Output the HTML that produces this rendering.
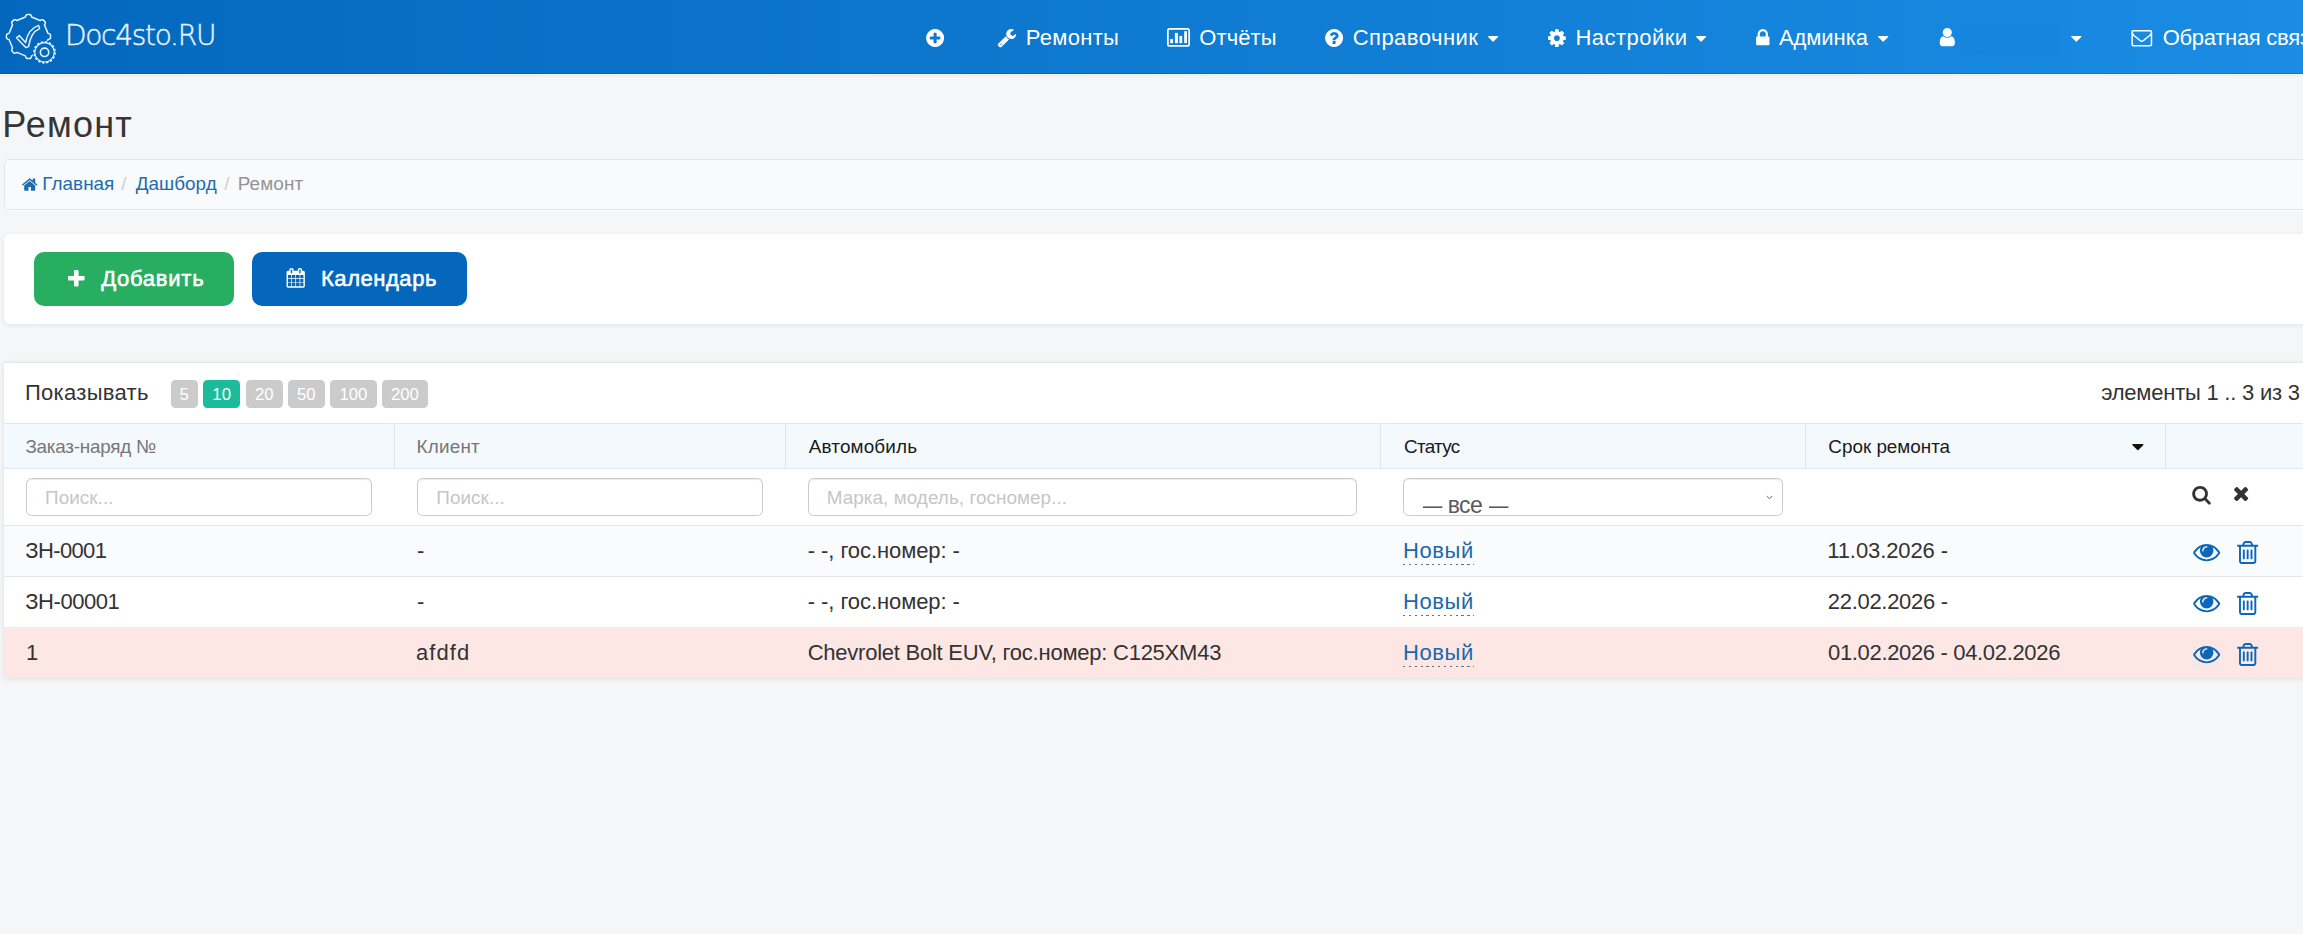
<!DOCTYPE html>
<html lang="ru">
<head>
<meta charset="utf-8">
<title>Ремонт</title>
<style>
*{box-sizing:border-box}
html,body{margin:0;padding:0}
body{width:2303px;height:934px;overflow:hidden;background:#f4f6f8;font-family:"Liberation Sans",sans-serif;color:#333;position:relative}
svg{display:block;overflow:visible}
.t{position:absolute;white-space:nowrap;display:block;margin:0;font-weight:400;text-decoration:none}
.abs{position:absolute}
.nav{position:absolute;left:0;top:0;width:2303px;height:74px;background:linear-gradient(to right,#0368bd 0%,#1a8ce4 100%);overflow:hidden;border-bottom:1px solid rgba(0,50,110,.22);box-shadow:0 1px 0 rgba(255,255,255,.45),0 2px 2px rgba(40,60,80,.06)}
.crumb{position:absolute;left:4px;top:159px;width:2320px;height:50.5px;background:#f9fafc;border:1px solid #e3e6e9;border-radius:5px;box-shadow:0 1px 0 rgba(255,255,255,.7)}
.panel1{position:absolute;left:4px;top:234px;width:2320px;height:90px;background:#fff;border-radius:6px;box-shadow:0 1px 5px rgba(40,50,70,.09)}
.btn{position:absolute;top:252px;height:54px;border-radius:10px}
.panel2{position:absolute;left:4px;top:362px;width:2320px;height:316px;background:#fff;border-top:1px solid #e5e8eb;box-shadow:0 1px 5px rgba(40,50,70,.11)}
.hl{position:absolute;left:4px;width:2320px;height:1px;background:#e3e7ea}
.vl{position:absolute;top:424px;width:1px;height:44px;background:#dfe5ea}
.inp{position:absolute;top:478px;height:38px;background:#fff;border:1px solid #cbcbcb;border-radius:5.5px;box-shadow:inset 0 1px 1px rgba(0,0,0,.075)}
.bd{position:absolute;top:380.2px;height:27.5px;border-radius:4.5px;background:#cbcbcb;color:#fff;font-size:16.8px;line-height:29px;text-align:center}
.dot{position:absolute;height:1px;background:repeating-linear-gradient(to right,#6a6f75 0,#6a6f75 2.2px,transparent 2.2px,transparent 5.85px)}
</style>
</head>
<body>
<nav class="nav"><div class="abs" style="left:1960px;top:24px;width:101px;height:31px;background:#1585dd"></div><svg style="position:absolute;left:0;top:5px" width="70" height="65" viewBox="0 5 70 65" fill="none" stroke="#e4f4ff" stroke-width="1.5" stroke-linejoin="round" stroke-linecap="round"><defs><mask id="mk"><rect x="0" y="0" width="70" height="75" fill="#fff"/><circle cx="44.55" cy="52.35" r="12.7" fill="#000"/></mask></defs><path mask="url(#mk)" d="M25.42 16.99 L25.72 15.74 L26.77 14.42 L30.23 14.42 L31.28 15.74 L31.58 16.99 L40.08 20.51 L41.18 19.84 L42.85 19.65 L45.30 22.10 L45.11 23.77 L44.44 24.87 L47.96 33.37 L49.21 33.67 L50.53 34.72 L50.53 38.18 L49.21 39.23 L47.96 39.53 L44.44 48.03 L45.11 49.13 L45.30 50.80 L42.85 53.25 L41.18 53.06 L40.08 52.39 L31.58 55.91 L31.28 57.16 L30.23 58.48 L26.77 58.48 L25.72 57.16 L25.42 55.91 L16.92 52.39 L15.82 53.06 L14.15 53.25 L11.70 50.80 L11.89 49.13 L12.56 48.03 L9.04 39.53 L7.79 39.23 L6.47 38.18 L6.47 34.72 L7.79 33.67 L9.04 33.37 L12.56 24.87 L11.89 23.77 L11.70 22.10 L14.15 19.65 L15.82 19.84 L16.92 20.51Z"/><path d="M16.6 37.9 L19.2 35.6 L25.6 42.6 C27.2 33.5 31.5 27.8 38.6 25.4 L39.6 28.6 C33.6 31 30 37 28.6 46.6 L25.8 47.6 Z"/><circle cx="44.55" cy="52.35" r="9.7" stroke-width="1.1"/><circle cx="44.55" cy="52.35" r="10.55" stroke-width="1.5" stroke-dasharray="2.5 1.643" stroke-linecap="butt"/><circle cx="44.55" cy="52.35" r="4.2" stroke-width="1.6"/></svg><span class="t" style="left:64.90px;top:15.60px;font-size:28.0px;line-height:39px;color:#e6f4ff;letter-spacing:-1.269px;font-family:'DejaVu Sans','Liberation Sans',sans-serif;font-weight:200;-webkit-text-stroke:0.45px #e6f4ff;">Doc4sto.RU</span><svg style="position:absolute;left:925.70px;top:28.80px" width="18.20" height="18.00" viewBox="128.0 128.0 1536.0 1536.0" preserveAspectRatio="xMidYMid meet"><path fill="#fff" d="M1344 960v-128q0-26-19-45t-45-19h-256v-256q0-26-19-45t-45-19h-128q-26 0-45 19t-19 45v256h-256q-26 0-45 19t-19 45v128q0 26 19 45t45 19h256v256q0 26 19 45t45 19h128q26 0 45-19t19-45v-256h256q26 0 45-19t19-45zm320-64q0 209-103 385.500t-279.500 279.500-385.500 103-385.500-103-279.500-279.500-103-385.500 103-385.500 279.500-279.500 385.500-103 385.500 103 279.500 279.500 103 385.500z"/></svg><svg style="position:absolute;left:997.20px;top:28.80px" width="20.00" height="18.50" viewBox="85.0 128.0 1641.0 1643.0" preserveAspectRatio="xMidYMid meet"><path fill="#fff" d="M448 1472q0-26-19-45t-45-19-45 19-19 45 19 45 45 19 45-19 19-45zm644-420l-682 682q-37 37-90 37-52 0-91-37l-106-108q-38-36-38-90 0-53 38-91l681-681q39 98 114.500 173.500t173.500 114.500zm634-435q0 39-23 106-47 134-164.500 217.500t-258.500 83.500q-185 0-316.500-131.500t-131.500-316.500 131.500-316.500 316.500-131.500q58 0 121.500 16.500t107.500 46.500q16 11 16 28t-16 28l-293 169v224l193 107q5-3 79-48.500t135.500-81 70.500-35.500q15 0 23.500 10t8.500 25z"/></svg><svg style="position:absolute;left:1325.20px;top:28.80px" width="18.20" height="18.00" viewBox="128.0 128.0 1536.0 1536.0" preserveAspectRatio="xMidYMid meet"><path fill="#fff" d="M1024 1376v-192q0-14-9-23t-23-9h-192q-14 0-23 9t-9 23v192q0 14 9 23t23 9h192q14 0 23-9t9-23zm256-672q0-88-55.500-163t-138.500-116-170-41q-243 0-371 213-15 24 8 42l132 100q7 6 19 6 16 0 25-12 53-68 86-92 34-24 86-24 48 0 85.500 26t37.500 59q0 38-20 61t-68 45q-63 28-115.500 86.500t-52.500 125.500v36q0 14 9 23t23 9h192q14 0 23-9t9-23q0-19 21.500-49.500t54.500-49.500q32-18 49-28.500t46-35 44.500-48 28-60.500 12.500-81zm384 192q0 209-103 385.500t-279.500 279.500-385.500 103-385.500-103-279.500-279.500-103-385.500 103-385.500 279.500-279.500 385.500-103 385.500 103 279.500 279.500 103 385.500z"/></svg><svg style="position:absolute;left:1488.40px;top:36.00px" width="10.20" height="5.80" viewBox="384.0 640.0 1024.0 576.0" preserveAspectRatio="xMidYMid meet"><path fill="#fff" d="M1408 704q0 26-19 45l-448 448q-19 19-45 19t-45-19l-448-448q-19-19-19-45t19-45 45-19h896q26 0 45 19t19 45z"/></svg><svg style="position:absolute;left:1548.00px;top:28.60px" width="17.80" height="18.20" viewBox="128.0 128.0 1536.0 1536.0" preserveAspectRatio="xMidYMid meet"><path fill="#fff" d="M1152 896q0-106-75-181t-181-75-181 75-75 181 75 181 181 75 181-75 75-181zm512-109v222q0 12-8 23t-20 13l-185 28q-19 54-39 91 35 50 107 138 10 12 10 25t-9 23q-27 37-99 108t-94 71q-12 0-26-9l-138-108q-44 23-91 38-16 136-29 186-7 28-36 28h-222q-14 0-24.500-8.500t-11.500-21.500l-28-184q-49-16-90-37l-141 107q-10 9-25 9-14 0-25-11-126-114-165-168-7-10-7-23 0-12 8-23 15-21 51-66.500t54-70.500q-27-50-41-99l-183-27q-13-2-21-12.500t-8-23.500v-222q0-12 8-23t19-13l186-28q14-46 39-92-40-57-107-138-10-12-10-24 0-10 9-23 26-36 98.500-107.500t94.500-71.500q13 0 26 10l138 107q44-23 91-38 16-136 29-186 7-28 36-28h222q14 0 24.500 8.500t11.500 21.500l28 184q49 16 90 37l142-107q9-9 24-9 13 0 25 10 129 119 165 170 7 8 7 22 0 12-8 23-15 21-51 66.500t-54 70.500q26 50 41 98l183 28q13 2 21 12.500t8 23.500z"/></svg><svg style="position:absolute;left:1696.20px;top:36.00px" width="10.20" height="5.80" viewBox="384.0 640.0 1024.0 576.0" preserveAspectRatio="xMidYMid meet"><path fill="#fff" d="M1408 704q0 26-19 45l-448 448q-19 19-45 19t-45-19l-448-448q-19-19-19-45t19-45 45-19h896q26 0 45 19t19 45z"/></svg><svg style="position:absolute;left:1756.00px;top:28.70px" width="13.60" height="16.30" viewBox="320.0 128.0 1152.0 1408.0" preserveAspectRatio="xMidYMid meet"><path fill="#fff" d="M640 768h512v-192q0-106-75-181t-181-75-181 75-75 181v192zm832 96v576q0 40-28 68t-68 28h-960q-40 0-68-28t-28-68v-576q0-40 28-68t68-28h32v-192q0-184 132-316t316-132 316 132 132 316v192h32q40 0 68 28t28 68z"/></svg><svg style="position:absolute;left:1878.00px;top:36.00px" width="10.30" height="5.80" viewBox="384.0 640.0 1024.0 576.0" preserveAspectRatio="xMidYMid meet"><path fill="#fff" d="M1408 704q0 26-19 45l-448 448q-19 19-45 19t-45-19l-448-448q-19-19-19-45t19-45 45-19h896q26 0 45 19t19 45z"/></svg><svg style="position:absolute;left:1938.60px;top:28.30px" width="16.60" height="18.20" viewBox="256.0 128.0 1280.0 1536.0" preserveAspectRatio="xMidYMid meet"><path fill="#fff" d="M1536 1399q0 109-62.500 187t-150.500 78h-854q-88 0-150.500-78t-62.500-187q0-85 8.500-160.500t31.500-152 58.500-131 94-89 134.500-34.500q131 128 313 128t313-128q76 0 134.500 34.500t94 89 58.500 131 31.500 152 8.500 160.500zm-256-887q0 159-112.500 271.500t-271.500 112.500-271.500-112.500-112.500-271.500 112.500-271.500 271.500-112.500 271.500 112.500 112.500 271.500z"/></svg><svg style="position:absolute;left:2070.60px;top:36.00px" width="10.60" height="5.80" viewBox="384.0 640.0 1024.0 576.0" preserveAspectRatio="xMidYMid meet"><path fill="#fff" d="M1408 704q0 26-19 45l-448 448q-19 19-45 19t-45-19l-448-448q-19-19-19-45t19-45 45-19h896q26 0 45 19t19 45z"/></svg><svg style="position:absolute;left:2130.80px;top:29.80px" width="21.60" height="16.40" viewBox="0.0 256.0 1792.0 1408.0" preserveAspectRatio="xMidYMid meet"><path fill="#fff" d="M1664 1504v-768q-32 36-69 66-268 206-426 338-51 43-83 67t-86.500 48.500-102.500 24.500h-2q-48 0-102.500-24.500t-86.500-48.500-83-67q-158-132-426-338-37-30-69-66v768q0 13 9.500 22.500t22.500 9.500h1472q13 0 22.500-9.500t9.500-22.500zm0-1051v-24.500l-.5-13-3-12.500-5.500-9-9-7.500-14-2.500h-1472q-13 0-22.500 9.500t-9.500 22.500q0 168 147 284 193 152 401 317 6 5 35 29.500t46 37.500 44.500 31.500 50.500 27.500 43 9h2q20 0 43-9t50.500-27.500 44.500-31.500 46-37.500 35-29.500q208-165 401-317 54-43 100.500-115.500t46.500-131.500zm128-37v1088q0 66-47 113t-113 47h-1472q-66 0-113-47t-47-113v-1088q0-66 47-113t113-47h1472q66 0 113 47t47 113z"/></svg><svg style="position:absolute;left:1166px;top:27px" width="26" height="22" viewBox="1166 27 26 22"><rect x="1167.85" y="28.95" width="21.3" height="17" rx="1.8" fill="none" stroke="#fff" stroke-width="1.75"/><rect x="1170.2" y="39.1" width="2.8" height="4.1" fill="#fff"/><rect x="1174.9" y="32.9" width="3" height="10.3" fill="#fff"/><rect x="1179.4" y="35.9" width="2.8" height="7.3" fill="#fff"/><rect x="1184.2" y="31.2" width="2.7" height="12" fill="#fff"/></svg><a class="t" style="left:1025.79px;top:21.57px;font-size:22.01px;line-height:31px;color:#fff;letter-spacing:0.299px;">Ремонты</a><a class="t" style="left:1199.36px;top:21.57px;font-size:22.01px;line-height:31px;color:#fff;letter-spacing:0.079px;">Отчёты</a><a class="t" style="left:1352.68px;top:21.57px;font-size:22.01px;line-height:31px;color:#fff;letter-spacing:0.469px;">Справочник</a><a class="t" style="left:1575.49px;top:21.57px;font-size:22.01px;line-height:31px;color:#fff;letter-spacing:0.457px;">Настройки</a><a class="t" style="left:1778.96px;top:21.57px;font-size:22.01px;line-height:31px;color:#fff;letter-spacing:-0.079px;">Админка</a><a class="t" style="left:2162.66px;top:21.57px;font-size:22.01px;line-height:31px;color:#fff;letter-spacing:-0.280px;">Обратная связь</a></nav>
<h1 class="t" style="left:2.25px;top:99.53px;font-size:36.0px;line-height:50px;color:#353535;letter-spacing:1.195px;">Ремонт</h1>
<div class="crumb"></div><svg style="position:absolute;left:22.20px;top:177.90px" width="15.40" height="13.10" viewBox="89.9 253.0 1612.2 1283.0" preserveAspectRatio="xMidYMid meet"><path fill="#1c6cae" d="M1472 992v480q0 26-19 45t-45 19h-384v-384h-256v384h-384q-26 0-45-19t-19-45v-480q0-1 .5-3t.5-3l575-474 575 474q1 2 1 6zm223-69l-62 74q-8 9-21 11h-3q-13 0-21-7l-692-577-692 577q-12 8-24 7-13-2-21-11l-62-74q-8-10-7-23.500t11-21.500l719-599q32-26 76-26t76 26l244 204v-195q0-14 9-23t23-9h192q14 0 23 9t9 23v408l219 182q10 8 11 21.500t-7 23.500z"/></svg><a class="t" style="left:42.35px;top:171.07px;font-size:18.86px;line-height:26px;color:#1c6cae;letter-spacing:0.029px;">Главная</a><span class="t" style="left:121.30px;top:171.07px;font-size:18.86px;line-height:26px;color:#cfcfcf;">/</span><a class="t" style="left:135.66px;top:171.07px;font-size:18.86px;line-height:26px;color:#1c6cae;letter-spacing:0.053px;">Дашборд</a><span class="t" style="left:224.30px;top:171.07px;font-size:18.86px;line-height:26px;color:#cfcfcf;">/</span><span class="t" style="left:237.65px;top:171.07px;font-size:18.86px;line-height:26px;color:#939393;letter-spacing:0.165px;">Ремонт</span>
<div class="panel1"></div><div class="btn" style="left:34px;width:200px;background:#27ae60"></div><div class="btn" style="left:251.7px;width:215px;background:#0467bc"></div><svg style="position:absolute;left:67.80px;top:269.90px" width="16.60" height="16.60" viewBox="192.0 128.0 1408.0 1408.0" preserveAspectRatio="xMidYMid meet"><path fill="#fff" d="M1600 736v192q0 40-28 68t-68 28h-416v416q0 40-28 68t-68 28h-192q-40 0-68-28t-28-68v-416h-416q-40 0-68-28t-28-68v-192q0-40 28-68t68-28h416v-416q0-40 28-68t68-28h192q40 0 68 28t28 68v416h416q40 0 68 28t28 68z"/></svg><span class="t" style="left:101.14px;top:263.37px;font-size:22.01px;line-height:31px;color:#fff;letter-spacing:0.748px;-webkit-text-stroke:0.55px #fff;">Добавить</span><svg style="position:absolute;left:285.60px;top:268.40px" width="19.40" height="19.70" viewBox="64.0 0.0 1664.0 1792.0" preserveAspectRatio="xMidYMid meet"><path fill="#fff" d="M192 1664h288v-288h-288v288zm352 0h320v-288h-320v288zm-352-352h288v-320h-288v320zm352 0h320v-320h-320v320zm-352-384h288v-288h-288v288zm736 736h320v-288h-320v288zm-384-736h320v-288h-320v288zm768 736h288v-288h-288v288zm-384-352h320v-320h-320v320zm-352-864v-288q0-13-9.500-22.500t-22.500-9.500h-64q-13 0-22.500 9.500t-9.500 22.500v288q0 13 9.500 22.500t22.500 9.500h64q13 0 22.500-9.500t9.500-22.500zm736 864h288v-320h-288v320zm-384-384h320v-288h-320v288zm384 0h288v-288h-288v288zm32-480v-288q0-13-9.500-22.500t-22.500-9.500h-64q-13 0-22.500 9.500t-9.500 22.500v288q0 13 9.500 22.500t22.500 9.500h64q13 0 22.500-9.500t9.500-22.500zm384-64v1280q0 52-38 90t-90 38h-1408q-52 0-90-38t-38-90v-1280q0-52 38-90t90-38h128v-96q0-66 47-113t113-47h64q66 0 113 47t47 113v96h384v-96q0-66 47-113t113-47h64q66 0 113 47t47 113v96h128q52 0 90 38t38 90z"/></svg><span class="t" style="left:320.99px;top:263.37px;font-size:22.01px;line-height:31px;color:#fff;letter-spacing:0.546px;-webkit-text-stroke:0.55px #fff;">Календарь</span>
<div class="panel2"></div>
<div class="abs" style="left:4px;top:423.5px;width:2320px;height:45px;background:#f4f9fd"></div><div class="abs" style="left:4px;top:525.5px;width:2320px;height:51px;background:#fafbfd"></div><div class="abs" style="left:4px;top:627px;width:2320px;height:51px;background:#fde7e5"></div><div class="hl" style="top:423px"></div><div class="hl" style="top:468px"></div><div class="hl" style="top:525px"></div><div class="hl" style="top:576px"></div><div class="vl" style="left:394px"></div><div class="vl" style="left:785px"></div><div class="vl" style="left:1380px"></div><div class="vl" style="left:1805px"></div><div class="vl" style="left:2165px"></div>
<span class="t" style="left:24.92px;top:377.07px;font-size:22.01px;line-height:31px;color:#333;letter-spacing:0.301px;">Показывать</span><span class="t" style="left:2101.21px;top:377.37px;font-size:22.01px;line-height:31px;color:#333;letter-spacing:-0.228px;">элементы 1 .. 3 из 3</span><div class="bd" style="left:170.9px;width:26.7px">5</div><div class="bd" style="left:203.2px;width:36.9px;background:#1abc9c">10</div><div class="bd" style="left:245.9px;width:36.9px">20</div><div class="bd" style="left:288.0px;width:36.7px">50</div><div class="bd" style="left:330.1px;width:46.7px">100</div><div class="bd" style="left:382.0px;width:45.9px">200</div>
<span class="t" style="left:25.38px;top:433.67px;font-size:18.86px;line-height:26px;color:#777;letter-spacing:-0.229px;">Заказ-наряд №</span><span class="t" style="left:416.55px;top:433.67px;font-size:18.86px;line-height:26px;color:#777;letter-spacing:0.221px;">Клиент</span><span class="t" style="left:808.86px;top:433.67px;font-size:18.86px;line-height:26px;color:#1a1a1a;letter-spacing:0.155px;">Автомобиль</span><span class="t" style="left:1404.04px;top:433.87px;font-size:18.86px;line-height:26px;color:#1a1a1a;letter-spacing:-0.712px;">Статус</span><span class="t" style="left:1828.34px;top:433.67px;font-size:18.86px;line-height:26px;color:#1a1a1a;letter-spacing:-0.008px;">Срок ремонта</span><svg style="position:absolute;left:2132.20px;top:444.00px" width="11.70" height="6.30" viewBox="384.0 640.0 1024.0 576.0" preserveAspectRatio="xMidYMid meet"><path fill="#111" d="M1408 704q0 26-19 45l-448 448q-19 19-45 19t-45-19l-448-448q-19-19-19-45t19-45 45-19h896q26 0 45 19t19 45z"/></svg><div class="inp" style="left:26px;width:346.0px"></div><div class="inp" style="left:417.2px;width:345.4px"></div><div class="inp" style="left:808px;width:549.4px"></div><div class="inp" style="left:1403.2px;width:379.4px"></div><span class="t" style="left:45.07px;top:484.67px;font-size:18.86px;line-height:26px;color:#c6c6c6;letter-spacing:0.053px;">Поиск...</span><span class="t" style="left:436.37px;top:484.67px;font-size:18.86px;line-height:26px;color:#c6c6c6;letter-spacing:0.053px;">Поиск...</span><span class="t" style="left:826.65px;top:484.67px;font-size:18.86px;line-height:26px;color:#c6c6c6;letter-spacing:0.067px;">Марка, модель, госномер...</span><div class="abs" style="left:1404.2px;top:479px;width:377px;height:36px;overflow:hidden;border-radius:5px"><span class="t" style="left:18.50px;top:10.33px;font-size:23.0px;line-height:32px;color:#5a5a5a;transform:scaleX(0.843);transform-origin:0 0;">—</span><span class="t" style="left:43.61px;top:10.33px;font-size:23.0px;line-height:32px;color:#5a5a5a;letter-spacing:-0.668px;">все</span><span class="t" style="left:84.80px;top:10.33px;font-size:23.0px;line-height:32px;color:#5a5a5a;transform:scaleX(0.843);transform-origin:0 0;">—</span></div><svg class="abs" style="left:1765.6px;top:495px" width="7" height="5" viewBox="0 0 7 5"><path d="M0.8 1 L3.5 3.7 L6.2 1" fill="none" stroke="#666" stroke-width="1"/></svg><svg style="position:absolute;left:2192.00px;top:485.60px" width="19.00" height="18.60" viewBox="64.0 128.0 1664.0 1664.0" preserveAspectRatio="xMidYMid meet"><path fill="#333" d="M1216 832q0-185-131.500-316.500t-316.500-131.500-316.500 131.500-131.500 316.500 131.500 316.500 316.500 131.500 316.500-131.500 131.500-316.500zm512 832q0 52-38 90t-90 38q-54 0-90-38l-343-342q-179 124-399 124-143 0-273.500-55.500t-225-150-150-225-55.500-273.500 55.500-273.500 150-225 225-150 273.500-55.500 273.500 55.500 225 150 150 225 55.500 273.500q0 220-124 399l343 343q37 37 37 90z"/></svg><svg style="position:absolute;left:2234.00px;top:487.30px" width="14.20" height="14.10" viewBox="302.0 366.0 1188.0 1188.0" preserveAspectRatio="xMidYMid meet"><path fill="#333" d="M1490 1322q0 40-28 68l-136 136q-28 28-68 28t-68-28l-294-294-294 294q-28 28-68 28t-68-28l-136-136q-28-28-28-68t28-68l294-294-294-294q-28-28-28-68t28-68l136-136q28-28 68-28t68 28l294 294 294-294q28-28 68-28t68 28l136 136q28 28 28 68t-28 68l-294 294 294 294q28 28 28 68z"/></svg>
<span class="t" style="left:25.28px;top:534.87px;font-size:22.01px;line-height:31px;color:#333;letter-spacing:-0.625px;">ЗН-0001</span><span class="t" style="left:417.02px;top:534.87px;font-size:22.01px;line-height:31px;color:#333;">-</span><span class="t" style="left:807.82px;top:534.87px;font-size:22.01px;line-height:31px;color:#333;letter-spacing:-0.085px;">- -, гос.номер: -</span><a class="t" style="left:1402.99px;top:534.87px;font-size:22.01px;line-height:31px;color:#1a69ad;letter-spacing:0.580px;">Новый</a><span class="t" style="left:1827.22px;top:534.87px;font-size:22.01px;line-height:31px;color:#333;letter-spacing:-0.096px;">11.03.2026 -</span><div class="dot" style="left:1403px;top:564px;width:70.5px"></div><svg style="position:absolute;left:2193.20px;top:544.20px" width="27.30" height="17.30" viewBox="0.0 384.0 1792.0 1152.0" preserveAspectRatio="xMidYMid meet"><path fill="#0d67b9" d="M1664 960q-152-236-381-353 61 104 61 225 0 185-131.500 316.500t-316.500 131.500-316.500-131.500-131.500-316.500q0-121 61-225-229 117-381 353 133 205 333.500 326.500t434.500 121.500 434.500-121.500 333.500-326.500zm-720-384q0-20-14-34t-34-14q-125 0-214.500 89.500t-89.500 214.500q0 20 14 34t34 14 34-14 14-34q0-86 61-147t147-61q20 0 34-14t14-34zm848 384q0 34-20 69-140 230-376.500 368.500t-499.500 138.500-499.500-139-376.500-368q-20-35-20-69t20-69q140-229 376.500-368t499.500-139 499.500 139 376.500 368q20 35 20 69z"/></svg><svg style="position:absolute;left:2237.40px;top:540.90px" width="21.30" height="23.00" viewBox="192.0 128.0 1408.0 1536.0" preserveAspectRatio="xMidYMid meet"><path fill="#0d67b9" d="M704 736v576q0 14-9 23t-23 9h-64q-14 0-23-9t-9-23v-576q0-14 9-23t23-9h64q14 0 23 9t9 23zm256 0v576q0 14-9 23t-23 9h-64q-14 0-23-9t-9-23v-576q0-14 9-23t23-9h64q14 0 23 9t9 23zm256 0v576q0 14-9 23t-23 9h-64q-14 0-23-9t-9-23v-576q0-14 9-23t23-9h64q14 0 23 9t9 23zm128 724v-948h-896v948q0 22 7 40.500t14.500 27 10.500 8.500h832q3 0 10.500-8.500t14.500-27 7-40.500zm-672-1076h448l-48-117q-7-9-17-11h-317q-10 2-17 11zm928 32v64q0 14-9 23t-23 9h-96v948q0 83-47 143.500t-113 60.500h-832q-66 0-113-58.500t-47-141.500v-952h-96q-14 0-23-9t-9-23v-64q0-14 9-23t23-9h309l70-167q15-37 54-63t79-26h320q40 0 79 26t54 63l70 167h309q14 0 23 9t9 23z"/></svg>
<span class="t" style="left:25.28px;top:585.87px;font-size:22.01px;line-height:31px;color:#333;letter-spacing:-0.441px;">ЗН-00001</span><span class="t" style="left:417.02px;top:585.87px;font-size:22.01px;line-height:31px;color:#333;">-</span><span class="t" style="left:807.82px;top:585.87px;font-size:22.01px;line-height:31px;color:#333;letter-spacing:-0.085px;">- -, гос.номер: -</span><a class="t" style="left:1402.99px;top:585.87px;font-size:22.01px;line-height:31px;color:#1a69ad;letter-spacing:0.580px;">Новый</a><span class="t" style="left:1827.79px;top:585.87px;font-size:22.01px;line-height:31px;color:#333;letter-spacing:-0.296px;">22.02.2026 -</span><div class="dot" style="left:1403px;top:615px;width:70.5px"></div><svg style="position:absolute;left:2193.20px;top:595.20px" width="27.30" height="17.30" viewBox="0.0 384.0 1792.0 1152.0" preserveAspectRatio="xMidYMid meet"><path fill="#0d67b9" d="M1664 960q-152-236-381-353 61 104 61 225 0 185-131.500 316.500t-316.500 131.500-316.500-131.500-131.500-316.500q0-121 61-225-229 117-381 353 133 205 333.500 326.500t434.500 121.500 434.500-121.500 333.500-326.500zm-720-384q0-20-14-34t-34-14q-125 0-214.500 89.500t-89.500 214.500q0 20 14 34t34 14 34-14 14-34q0-86 61-147t147-61q20 0 34-14t14-34zm848 384q0 34-20 69-140 230-376.500 368.500t-499.500 138.500-499.500-139-376.500-368q-20-35-20-69t20-69q140-229 376.500-368t499.500-139 499.500 139 376.500 368q20 35 20 69z"/></svg><svg style="position:absolute;left:2237.40px;top:591.90px" width="21.30" height="23.00" viewBox="192.0 128.0 1408.0 1536.0" preserveAspectRatio="xMidYMid meet"><path fill="#0d67b9" d="M704 736v576q0 14-9 23t-23 9h-64q-14 0-23-9t-9-23v-576q0-14 9-23t23-9h64q14 0 23 9t9 23zm256 0v576q0 14-9 23t-23 9h-64q-14 0-23-9t-9-23v-576q0-14 9-23t23-9h64q14 0 23 9t9 23zm256 0v576q0 14-9 23t-23 9h-64q-14 0-23-9t-9-23v-576q0-14 9-23t23-9h64q14 0 23 9t9 23zm128 724v-948h-896v948q0 22 7 40.500t14.500 27 10.500 8.500h832q3 0 10.500-8.500t14.500-27 7-40.500zm-672-1076h448l-48-117q-7-9-17-11h-317q-10 2-17 11zm928 32v64q0 14-9 23t-23 9h-96v948q0 83-47 143.500t-113 60.500h-832q-66 0-113-58.500t-47-141.500v-952h-96q-14 0-23-9t-9-23v-64q0-14 9-23t23-9h309l70-167q15-37 54-63t79-26h320q40 0 79 26t54 63l70 167h309q14 0 23 9t9 23z"/></svg>
<span class="t" style="left:25.92px;top:636.87px;font-size:22.01px;line-height:31px;color:#333;">1</span><span class="t" style="left:415.97px;top:636.87px;font-size:22.01px;line-height:31px;color:#333;letter-spacing:1.106px;">afdfd</span><span class="t" style="left:807.68px;top:636.87px;font-size:22.01px;line-height:31px;color:#333;letter-spacing:-0.242px;">Chevrolet Bolt EUV, гос.номер: С125ХМ43</span><a class="t" style="left:1402.99px;top:636.87px;font-size:22.01px;line-height:31px;color:#1a69ad;letter-spacing:0.580px;">Новый</a><span class="t" style="left:1828.04px;top:636.87px;font-size:22.01px;line-height:31px;color:#333;letter-spacing:-0.338px;">01.02.2026 - 04.02.2026</span><div class="dot" style="left:1403px;top:666px;width:70.5px"></div><svg style="position:absolute;left:2193.20px;top:646.20px" width="27.30" height="17.30" viewBox="0.0 384.0 1792.0 1152.0" preserveAspectRatio="xMidYMid meet"><path fill="#0d67b9" d="M1664 960q-152-236-381-353 61 104 61 225 0 185-131.500 316.500t-316.500 131.500-316.500-131.500-131.500-316.500q0-121 61-225-229 117-381 353 133 205 333.500 326.500t434.500 121.500 434.500-121.500 333.500-326.500zm-720-384q0-20-14-34t-34-14q-125 0-214.500 89.500t-89.500 214.500q0 20 14 34t34 14 34-14 14-34q0-86 61-147t147-61q20 0 34-14t14-34zm848 384q0 34-20 69-140 230-376.500 368.500t-499.500 138.500-499.500-139-376.500-368q-20-35-20-69t20-69q140-229 376.500-368t499.500-139 499.500 139 376.500 368q20 35 20 69z"/></svg><svg style="position:absolute;left:2237.40px;top:642.90px" width="21.30" height="23.00" viewBox="192.0 128.0 1408.0 1536.0" preserveAspectRatio="xMidYMid meet"><path fill="#0d67b9" d="M704 736v576q0 14-9 23t-23 9h-64q-14 0-23-9t-9-23v-576q0-14 9-23t23-9h64q14 0 23 9t9 23zm256 0v576q0 14-9 23t-23 9h-64q-14 0-23-9t-9-23v-576q0-14 9-23t23-9h64q14 0 23 9t9 23zm256 0v576q0 14-9 23t-23 9h-64q-14 0-23-9t-9-23v-576q0-14 9-23t23-9h64q14 0 23 9t9 23zm128 724v-948h-896v948q0 22 7 40.500t14.500 27 10.500 8.500h832q3 0 10.500-8.500t14.500-27 7-40.500zm-672-1076h448l-48-117q-7-9-17-11h-317q-10 2-17 11zm928 32v64q0 14-9 23t-23 9h-96v948q0 83-47 143.500t-113 60.500h-832q-66 0-113-58.500t-47-141.500v-952h-96q-14 0-23-9t-9-23v-64q0-14 9-23t23-9h309l70-167q15-37 54-63t79-26h320q40 0 79 26t54 63l70 167h309q14 0 23 9t9 23z"/></svg>
</body>
</html>
